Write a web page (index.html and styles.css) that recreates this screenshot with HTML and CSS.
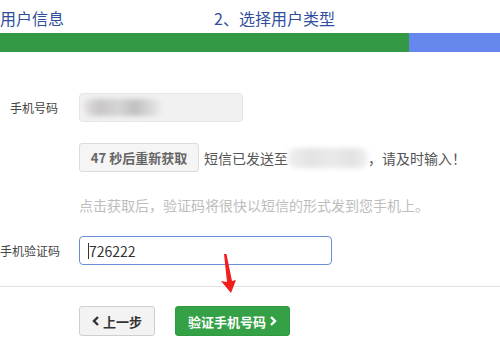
FILE: index.html
```html
<!DOCTYPE html>
<html lang="zh-CN">
<head>
<meta charset="utf-8">
<title>验证手机号码</title>
<link rel="stylesheet" href="styles.css">
</head>
<body>
<div class="page">
  <div class="steps">
    <div class="step step-first">用户信息</div>
    <div class="step">2、选择用户类型</div>
  </div>
  <div class="progress">
    <div class="progress-done"></div>
    <div class="progress-todo"></div>
  </div>

  <div class="form">
    <div class="label">手机号码</div>
    <div class="field">
      <div class="input input-readonly"><span class="blur blur-phone"></span></div>
    </div>

    <div class="label"></div>
    <div class="field sms-row">
      <button class="btn btn-count">47 秒后重新获取</button>
      <span class="sms-text">短信已发送至</span><span class="blur blur-inline"></span><span class="sms-text">，请及时输入！</span>
    </div>

    <div class="label"></div>
    <div class="field hint">点击获取后，验证码将很快以短信的形式发到您手机上。</div>

    <div class="label">手机验证码</div>
    <div class="field">
      <div class="input input-active"><span class="caret"></span>726222</div>
    </div>
  </div>

  <div class="divider"></div>

  <div class="actions">
    <button class="btn btn-back"><svg class="chev" width="8" height="10" viewBox="0 0 8 10"><path d="M6 1 L2 5 L6 9" fill="none" stroke="#333" stroke-width="2.4"/></svg>上一步</button>
    <button class="btn btn-next">验证手机号码<svg class="chev chev-r" width="8" height="10" viewBox="0 0 8 10"><path d="M2 1 L6 5 L2 9" fill="none" stroke="#fff" stroke-width="2.4"/></svg></button>
  </div>

  <svg class="arrow" width="20" height="44" viewBox="0 0 20 44">
    <polygon points="3,0 5.5,0 11,27 15,26 10,39 0,27 6,28" fill="#f21d1d"/>
  </svg>
</div>
</body>
</html>
```

FILE: styles.css
```css
* { box-sizing: border-box; }
html, body { margin: 0; padding: 0; background: #fff; }
body {
  font-family: "Noto Sans CJK SC", "Liberation Sans", sans-serif;
  color: #333;
  width: 500px;
  height: 350px;
  overflow: hidden;
}
.page { position: relative; width: 500px; height: 350px; }

.steps {
  display: flex;
  height: 33px;
  align-items: center;
  font-size: 16px;
  color: #2f4f9e;
  padding-top: 2px;
}
.step-first { width: 214px; }

.progress { display: flex; height: 19px; }
.progress-done { width: 409px; background: #339944; }
.progress-todo { flex: 1; background: #6688ee; }

.form {
  display: grid;
  grid-template-columns: 58px 1fr;
  column-gap: 21px;
  row-gap: 21px;
  padding-top: 41px;
  align-items: center;
}
.label {
  font-size: 12px;
  color: #444;
  text-align: right;
  white-space: nowrap;
}
.field { display: flex; align-items: center; }

.input {
  height: 29px;
  border-radius: 4px;
  display: flex;
  align-items: center;
  font-size: 14px;
}
.input-readonly {
  width: 164px;
  background: #f1f1f1;
  border: 1px solid #e6e6e6;
  padding-left: 4px;
}
.input-active {
  width: 253px;
  border: 1px solid #6b8fd4;
  padding-left: 8px;
  color: #333;
}
.caret {
  display: inline-block;
  width: 1px;
  height: 16px;
  background: #333;
  margin-right: 0;
}

.blur {
  display: inline-block;
  filter: blur(2.5px);
  border-radius: 8px;
}
.blur-phone {
  width: 78px;
  height: 17px;
  background: linear-gradient(90deg, #e2dfdf 0%, #c8c6c6 20%, #d6d5d5 45%, #c1bfbf 65%, #d8d8d8 85%, #ececec 100%);
}
.blur-inline {
  width: 80px;
  height: 20px;
  background: linear-gradient(90deg, #eeeeee 0%, #e3e3e3 30%, #eaeaea 55%, #e2e2e2 80%, #f1f1f1 100%);
}

.sms-row { gap: 0; }
.btn {
  font-family: "Noto Sans CJK SC", "Liberation Sans", sans-serif;
  font-weight: bold;
  font-size: 13px;
  height: 29px;
  border-radius: 3px;
  display: inline-flex;
  align-items: center;
  justify-content: center;
  padding: 0;
  cursor: pointer;
}
.btn-count {
  width: 120px;
  background: #f5f5f5;
  border: 1px solid #dcdcdc;
  color: #666;
  margin-right: 5px;
}
.sms-text { font-size: 14px; color: #555; }

.hint { font-size: 14px; color: #bdbdbd; line-height: 20px; margin-top: 2px; }

.divider {
  margin-top: 21px;
  height: 1px;
  background: #e3e3e3;
}

.actions {
  display: flex;
  gap: 20px;
  padding-left: 79px;
  margin-top: 19px;
}
.btn-back {
  width: 76px;
  height: 30px;
  background: #f3f3f3;
  border: 1px solid #cfcfcf;
  color: #333;
}
.btn-next {
  width: 115px;
  height: 30px;
  background: #34a146;
  border: 1px solid #2f9a40;
  color: #fff;
}
.chev { margin-right: 3px; }
.chev-r { margin-right: 0; margin-left: 3px; }

.arrow {
  position: absolute;
  left: 221px;
  top: 254px;
}
```
